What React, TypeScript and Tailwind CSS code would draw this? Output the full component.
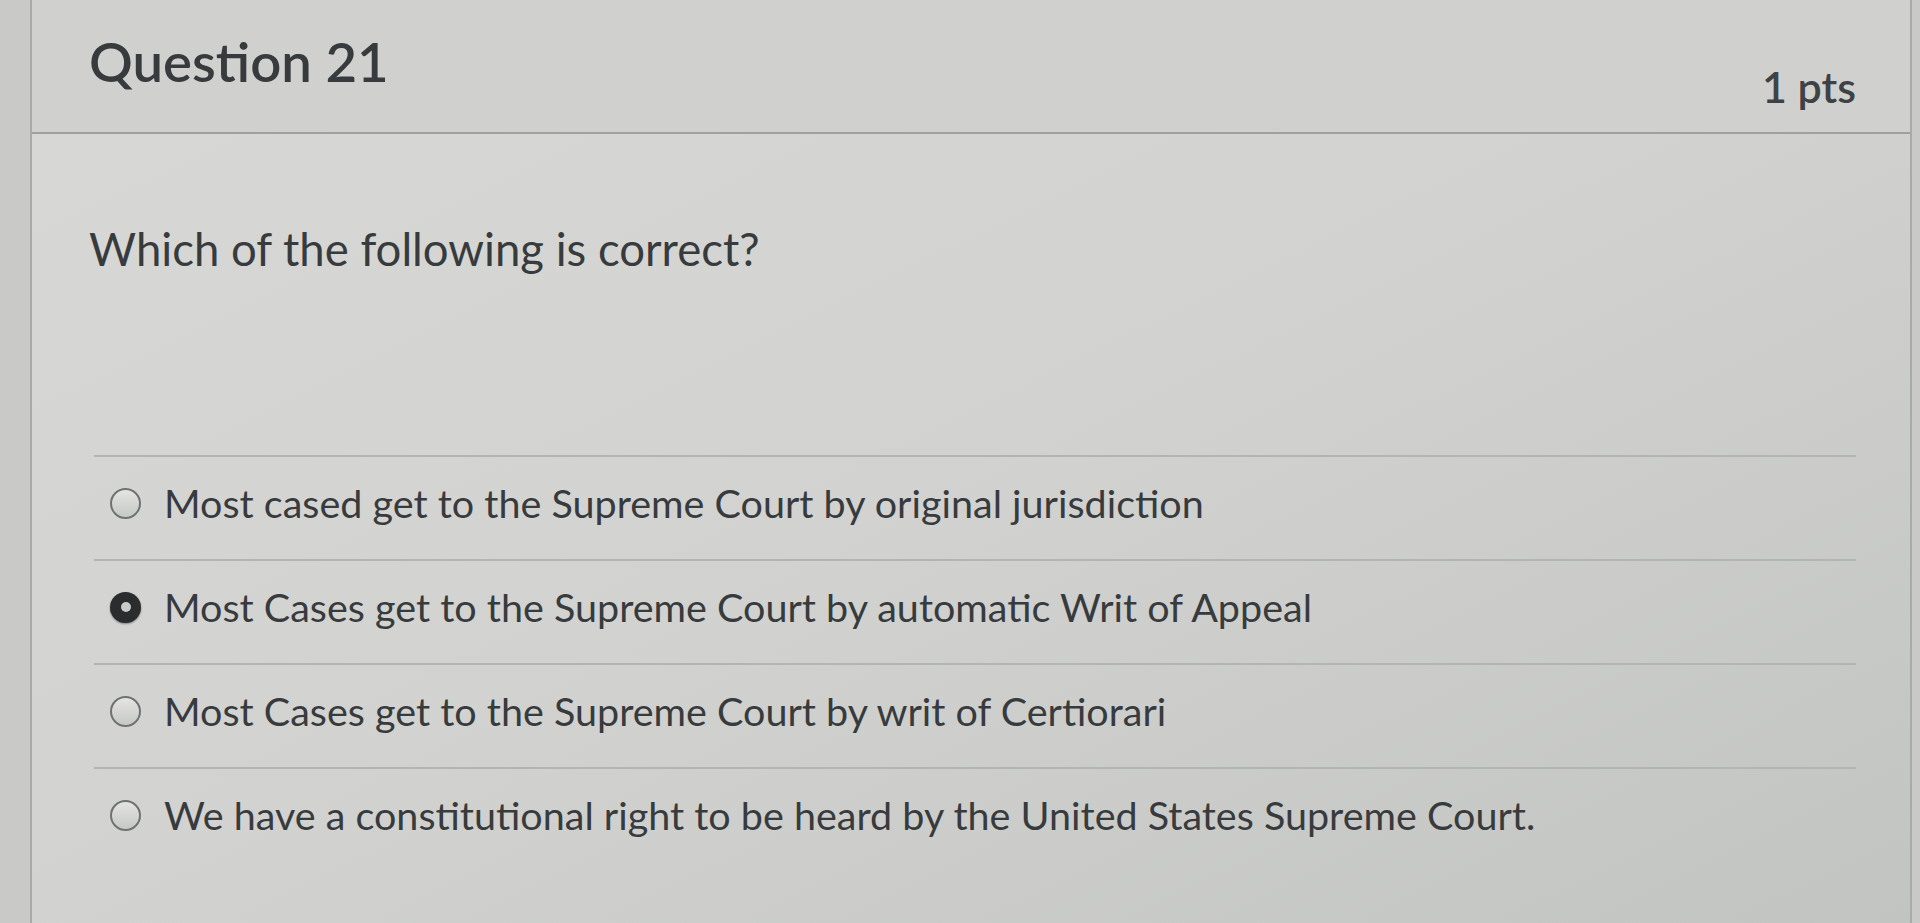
import { useState } from 'react'

const options = [
    'Most cased get to the Supreme Court by original jurisdiction',
    'Most Cases get to the Supreme Court by automatic Writ of Appeal',
    'Most Cases get to the Supreme Court by writ of Certiorari',
    'We have a constitutional right to be heard by the United States Supreme Court.',
]

function Radio({ checked }: { checked: boolean }) {
    if (checked) {
        return (
            <span className="flex h-[31px] w-[31px] shrink-0 items-center justify-center rounded-full bg-[#2a2c2d] shadow-[0_1px_2px_rgba(0,0,0,0.4)]">
                <span className="h-[10px] w-[10px] rounded-full bg-[#c9cbc9]" />
            </span>
        )
    }
    return (
        <span className="h-[31px] w-[31px] shrink-0 rounded-full border-[2px] border-[#6f7274] bg-gradient-to-b from-[#e4e5e3] to-[#c6c8c6]" />
    )
}

export default function App() {
    const [selected, setSelected] = useState(1)

    return (
        <div className="h-[923px] w-full overflow-hidden bg-[#c9cac8] font-['Lato','Liberation_Sans',sans-serif] text-[#383b3d]">
            <div className="ml-[30px] h-full w-[1882px] border-x-2 border-[#a9aba9] bg-gradient-to-br from-[#d8d9d7] via-[#d2d3d1] to-[#c2c4c2]">
                {/* header */}
                <div className="flex h-[134px] items-start justify-between border-b-2 border-[#9fa19f] bg-[#d0d1cf] pl-[57px] pr-[54px]">
                    <h2 className="mt-[30px] text-[54.5px] font-semibold leading-[62px]">Question 21</h2>
                    <span className="mt-[61px] text-[43px] font-semibold leading-[52px] text-[#3f4244]">1 pts</span>
                </div>

                {/* body */}
                <div className="pl-[57px] pr-[54px] pt-[89px]">
                    <p className="text-[45.5px] leading-[52px]">Which of the following is correct?</p>

                    <div className="ml-[5px] mt-[180px]">
                        {options.map((opt, i) => (
                            <label
                                key={i}
                                onClick={() => setSelected(i)}
                                className="flex h-[104px] cursor-pointer items-center gap-[23px] border-t-2 border-[#b3b5b3] pb-[10px] pl-[16px]"
                            >
                                <Radio checked={selected === i} />
                                <span className="text-[39.5px] leading-[46px]">{opt}</span>
                            </label>
                        ))}
                    </div>
                </div>
            </div>
        </div>
    )
}
